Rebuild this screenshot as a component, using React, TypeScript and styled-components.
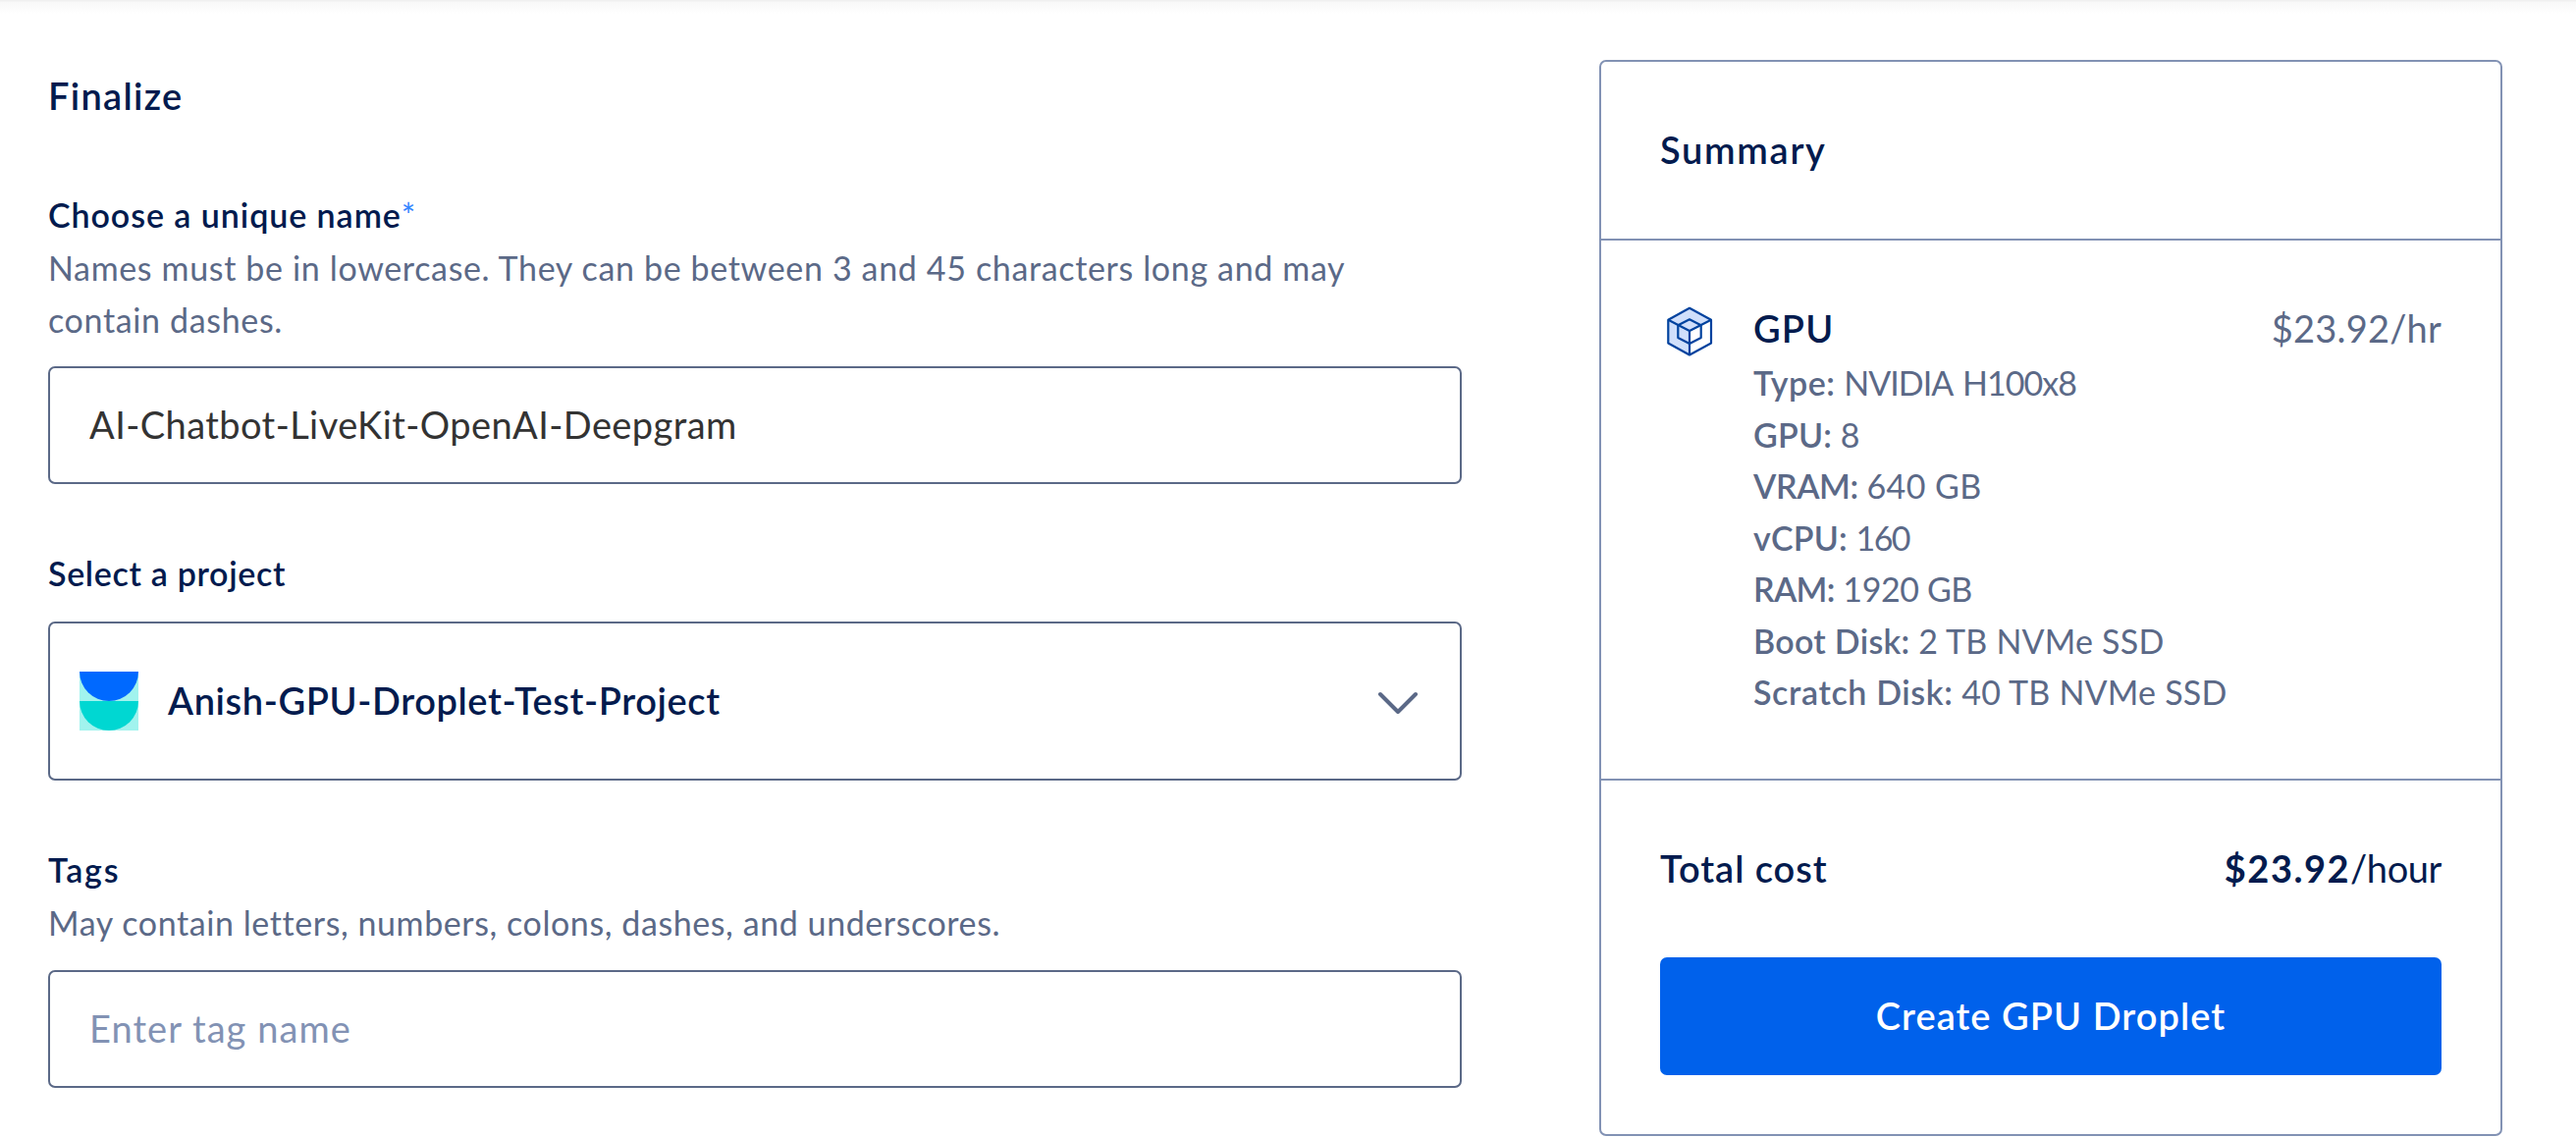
import React from "react";
import styled, { createGlobalStyle } from "styled-components";

const color = {
  ink: "#031b4e",
  muted: "#5b6987",
  faint: "#8292b4",
  input: "#333333",
  blue: "#0061eb",
};

const GlobalStyle = createGlobalStyle`
  * { box-sizing: border-box; }
  body {
    margin: 0;
    background: #fff;
    color: ${color.ink};
    font-family: Lato, "Open Sans", sans-serif;
    font-variant-ligatures: none;
  }
`;

const Page = styled.main`
  display: flex;
  align-items: flex-start;
  gap: 140px;
  height: 1158px;
  padding: 61px 75px 0 49px;
  overflow: hidden;
  background: linear-gradient(#f0f0f0 0, #f0f0f0 1px, #f8f8f8 2px, #fff 14px) no-repeat top / 100% 14px;
`;

const Form = styled.form`
  display: flex;
  flex-direction: column;
  width: 1440px;
  padding-top: 12px;
`;

const Heading = styled.h2<{ $track?: number }>`
  margin: 0;
  font-size: 38px;
  line-height: 48px;
  font-weight: 600;
  white-space: nowrap;
  letter-spacing: ${(p) => p.$track ?? 1}px;
`;

const Field = styled.section<{ $top: number }>`
  display: flex;
  flex-direction: column;
  margin-top: ${(p) => p.$top}px;
`;

const Label = styled.label<{ $track: number }>`
  font-size: 34px;
  line-height: 52px;
  font-weight: 600;
  letter-spacing: ${(p) => p.$track}px;
`;

const Required = styled.span`
  color: #3385ff;
  font-weight: 400;
  letter-spacing: 0;
`;

const Help = styled.p<{ $track: number }>`
  margin: 2px 0 21px;
  color: ${color.muted};
  font-size: 34px;
  line-height: 52.5px;
  letter-spacing: ${(p) => p.$track}px;
`;

const TextInput = styled.input<{ $track: number }>`
  height: 120px;
  padding: 0 40px 2px;
  border: 2px solid ${color.muted};
  border-radius: 7px;
  outline: none;
  background: #fff;
  color: ${color.input};
  font: 400 38px Lato, "Open Sans", sans-serif;
  letter-spacing: ${(p) => p.$track}px;
  &::placeholder { color: ${color.faint}; opacity: 1; }
`;

const ProjectSelect = styled.div`
  display: flex;
  align-items: center;
  height: 162px;
  margin-top: 23px;
  padding: 0 42px 0 30px;
  border: 2px solid ${color.muted};
  border-radius: 7px;
`;

const ProjectName = styled.span`
  flex: 1;
  margin-left: 30px;
  font-size: 38px;
  line-height: 48px;
  padding-bottom: 2px;
  font-weight: 600;
  letter-spacing: 0.61px;
`;

const Card = styled.aside`
  width: 920px;
  height: 1096px;
  border: 2px solid ${color.faint};
  border-radius: 7px;
`;

const CardHeader = styled.header`
  padding: 65px 60px 67px;
  border-bottom: 2px solid ${color.faint};
`;

const CardBody = styled.div`
  display: grid;
  grid-template-columns: 60px 1fr auto;
  column-gap: 35px;
  height: 550px;
  padding: 65px 60px 0;
  border-bottom: 2px solid ${color.faint};
`;

const Price = styled.span`
  color: ${color.muted};
  font-size: 38px;
  line-height: 48px;
  letter-spacing: 0.2px;
`;

const Specs = styled.ul`
  margin: 6px 0 0;
  padding: 0;
  list-style: none;
  color: ${color.muted};
  font-size: 34px;
  line-height: 52.5px;
  white-space: nowrap;
`;

const SpecName = styled.b<{ $track: number }>`
  font-weight: 600;
  letter-spacing: ${(p) => p.$track}px;
`;

const SpecValue = styled.span<{ $track: number; $word?: number }>`
  letter-spacing: ${(p) => p.$track}px;
  word-spacing: ${(p) => p.$word ?? 0}px;
`;

const CardFooter = styled.footer`
  padding: 65px 60px 60px;
`;

const TotalRow = styled.div`
  display: flex;
  justify-content: space-between;
  margin-bottom: 67px;
`;

const Total = styled.span`
  font-size: 38px;
  line-height: 48px;
  letter-spacing: -0.4px;
  b { font-weight: 700; letter-spacing: 1.5px; }
`;

const CreateButton = styled.button`
  display: block;
  width: 100%;
  height: 120px;
  padding: 0 0 3px;
  border: 0;
  border-radius: 7px;
  background: ${color.blue};
  color: #fff;
  font: 600 38px Lato, "Open Sans", sans-serif;
  letter-spacing: 1.05px;
`;

const CubeSvg = styled.svg`
  margin-top: -1px;
`;

type Spec = { name: string; value: string; nameTrack: number; valueTrack: number; word?: number };

const specs: Spec[] = [
  { name: "Type:", value: "NVIDIA H100x8", nameTrack: 0.5, valueTrack: -0.95, word: 3 },
  { name: "GPU:", value: "8", nameTrack: 0.2, valueTrack: 0 },
  { name: "VRAM:", value: "640 GB", nameTrack: -0.4, valueTrack: 0.4 },
  { name: "vCPU:", value: "160", nameTrack: 0.2, valueTrack: -1.6 },
  { name: "RAM:", value: "1920 GB", nameTrack: -0.7, valueTrack: -0.4 },
  { name: "Boot Disk:", value: "2 TB NVMe SSD", nameTrack: 0.3, valueTrack: 0.2 },
  { name: "Scratch Disk:", value: "40 TB NVMe SSD", nameTrack: 0.63, valueTrack: 0.22 },
];

const ProjectIcon = () => (
  <svg width="60" height="60" viewBox="0 0 60 60" aria-hidden="true">
    <rect width="60" height="60" fill="#a1f3ee" />
    <path d="M0 0h60a30 30 0 0 1-60 0z" fill="#0069ff" />
    <path d="M0 30h60a30 30 0 0 1-60 0z" fill="#00d7d2" />
  </svg>
);

const ChevronIcon = () => (
  <svg width="42" height="26" viewBox="0 0 42 26" fill="none" aria-hidden="true">
    <path d="M3 6 21 24 39 6" stroke={color.muted} strokeWidth="4" strokeLinecap="round" strokeLinejoin="round" />
  </svg>
);

const CubeIcon = () => (
  <CubeSvg width="60" height="56" viewBox="-1 3 60 56" fill="none" aria-hidden="true">
    <path d="M29 7.8 51 19.8 29 31V55.5L7.3 43.5V19.8z" fill="#d0dffb" />
    <path d="M29 31 40.7 25.3V38L29 44z" fill="#fff" />
    <g stroke="#00429e" strokeWidth="2.2" strokeLinejoin="round">
      <path d="M29 7.8 51 19.8V43.5L29 55.5 7.3 43.5V19.8z" />
      <path d="M29 19.3 40.7 25.3V38L29 44 17.3 38V25.3z" />
      <path d="M7.3 19.8 29 31 51 19.8M29 31V55.5" />
    </g>
  </CubeSvg>
);

export default function App() {
  return (
    <>
      <GlobalStyle />
      <Page>
        <Form>
          <Heading $track={1.3}>Finalize</Heading>
          <Field $top={72}>
            <Label $track={0.93}>
              Choose a unique name<Required>*</Required>
            </Label>
            <Help $track={0.65}>
              Names must be in lowercase. They can be between 3 and 45 characters long and may
              <br />
              contain dashes.
            </Help>
            <TextInput $track={0.42} defaultValue="AI-Chatbot-LiveKit-OpenAI-Deepgram" spellCheck={false} />
          </Field>
          <Field $top={65}>
            <Label $track={0.67}>Select a project</Label>
            <ProjectSelect>
              <ProjectIcon />
              <ProjectName>Anish-GPU-Droplet-Test-Project</ProjectName>
              <ChevronIcon />
            </ProjectSelect>
          </Field>
          <Field $top={65}>
            <Label $track={1.8}>Tags</Label>
            <Help $track={0.58}>May contain letters, numbers, colons, dashes, and underscores.</Help>
            <TextInput $track={1.05} placeholder="Enter tag name" />
          </Field>
        </Form>
        <Card>
          <CardHeader>
            <Heading $track={1.7}>Summary</Heading>
          </CardHeader>
          <CardBody>
            <CubeIcon />
            <div>
              <Heading $track={1.2}>GPU</Heading>
              <Specs>
                {specs.map((s) => (
                  <li key={s.name}>
                    <SpecName $track={s.nameTrack}>{s.name}</SpecName>{" "}
                    <SpecValue $track={s.valueTrack} $word={s.word}>{s.value}</SpecValue>
                  </li>
                ))}
              </Specs>
            </div>
            <Price>$23.92/hr</Price>
          </CardBody>
          <CardFooter>
            <TotalRow>
              <Heading $track={0.95}>Total cost</Heading>
              <Total>
                <b>$23.92</b>/hour
              </Total>
            </TotalRow>
            <CreateButton type="button">Create GPU Droplet</CreateButton>
          </CardFooter>
        </Card>
      </Page>
    </>
  );
}
